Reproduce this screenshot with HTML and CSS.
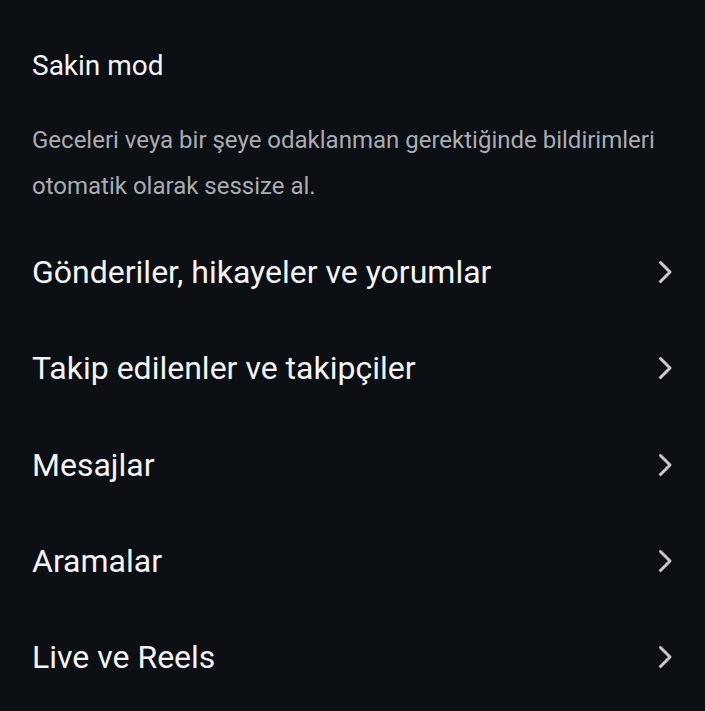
FILE: index.html
```html
<!DOCTYPE html>
<html lang="tr">
<head>
<meta charset="utf-8">
<link rel="stylesheet" href="styles.css">
</head>
<body>
<div class="page">
  <h1 class="title">Sakin mod</h1>
  <p class="desc">Geceleri veya bir şeye odaklanman gerektiğinde bildirimleri otomatik olarak sessize al.</p>
  <ul class="list">
    <li class="row"><span class="label">Gönderiler, hikayeler ve yorumlar</span><svg class="chev" viewBox="0 0 16 24" width="16" height="24"><path d="M3.5 2.5 L13 12 L3.5 21.5" fill="none" stroke="currentColor" stroke-width="3" stroke-linecap="round" stroke-linejoin="round"/></svg></li>
    <li class="row"><span class="label">Takip edilenler ve takipçiler</span><svg class="chev" viewBox="0 0 16 24" width="16" height="24"><path d="M3.5 2.5 L13 12 L3.5 21.5" fill="none" stroke="currentColor" stroke-width="3" stroke-linecap="round" stroke-linejoin="round"/></svg></li>
    <li class="row"><span class="label">Mesajlar</span><svg class="chev" viewBox="0 0 16 24" width="16" height="24"><path d="M3.5 2.5 L13 12 L3.5 21.5" fill="none" stroke="currentColor" stroke-width="3" stroke-linecap="round" stroke-linejoin="round"/></svg></li>
    <li class="row"><span class="label">Aramalar</span><svg class="chev" viewBox="0 0 16 24" width="16" height="24"><path d="M3.5 2.5 L13 12 L3.5 21.5" fill="none" stroke="currentColor" stroke-width="3" stroke-linecap="round" stroke-linejoin="round"/></svg></li>
    <li class="row"><span class="label">Live ve Reels</span><svg class="chev" viewBox="0 0 16 24" width="16" height="24"><path d="M3.5 2.5 L13 12 L3.5 21.5" fill="none" stroke="currentColor" stroke-width="3" stroke-linecap="round" stroke-linejoin="round"/></svg></li>
  </ul>
</div>
</body>
</html>
```

FILE: styles.css
```css
html, body {
  margin: 0;
  padding: 0;
  background: #0c0f14;
}
body {
  font-family: Roboto, "Noto Sans", sans-serif;
  width: 705px;
  height: 711px;
  overflow: hidden;
}
.page {
  padding: 46px 32px 0 32px;
}
.title {
  margin: 0;
  font-size: 28px;
  font-weight: 400;
  line-height: 40px;
  color: #f4f4f4;
}
.desc {
  margin: 31px 0 0 0;
  font-size: 24px;
  line-height: 46px;
  color: #a9acb1;
}
.list {
  list-style: none;
  margin: 15px 0 0 0;
  padding: 0;
}
.row {
  height: 96.25px;
  display: flex;
  align-items: center;
  justify-content: space-between;
}
.label {
  font-size: 32px;
  color: #f4f4f4;
}
.chev {
  color: #c9cacd;
  margin-right: 0;
}
```
